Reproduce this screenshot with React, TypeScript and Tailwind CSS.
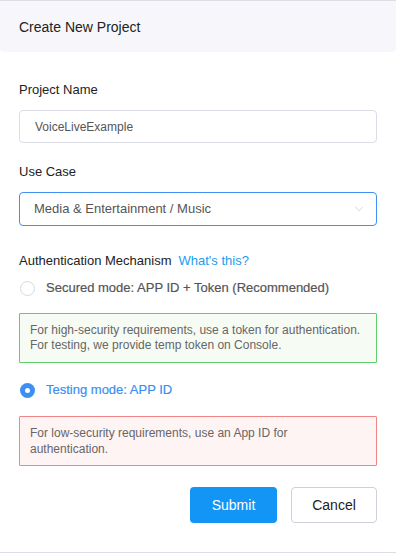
import { ChevronDown } from "lucide-react";

function Radio({ checked }: { checked?: boolean }) {
  if (checked) {
    return (
      <span className="flex h-[15px] w-[15px] shrink-0 items-center justify-center rounded-full bg-[#3d8ef5]">
        <span className="h-[5px] w-[5px] rounded-full bg-white" />
      </span>
    );
  }
  return <span className="h-[15px] w-[15px] shrink-0 rounded-full border border-[#d8d8e2] bg-white" />;
}

export default function App() {
  return (
    <div className="flex h-[553px] w-[396px] flex-col border-y border-[#dddde5] bg-white font-['Liberation_Sans',Arial,sans-serif] text-[#222]">
      <div className="flex h-[51px] shrink-0 items-center rounded-b-[4px] bg-[#f7f7fb] pl-[19px] pt-[2px] text-[14px]">
        Create New Project
      </div>

      <div className="flex flex-col px-[19px]">
        <label className="mt-[28px] text-[13px] leading-[20px]">Project Name</label>
        <div className="mt-[10px] flex h-[33px] items-center rounded-[4px] border border-[#dcdce6] px-[15px] text-[12px] text-[#555]">
          VoiceLiveExample
        </div>

        <label className="mt-[19px] text-[13px] leading-[20px]">Use Case</label>
        <div className="mt-[10px] flex h-[34px] items-center justify-between rounded-[4px] border border-[#3f8ff5] pl-[14px] pr-[10px] text-[13px] text-[#555]">
          <span>Media &amp; Entertainment / Music</span>
          <ChevronDown className="h-[14px] w-[14px] text-[#c4c4cc]" strokeWidth={1.2} />
        </div>

        <div className="mt-[25px] flex gap-[7px] text-[13px] leading-[20px]">
          <span>Authentication Mechanism</span>
          <span className="text-[#1d9bf0]">What's this?</span>
        </div>

        <div className="mt-[7px] flex items-center gap-[11px] pl-px text-[13px] font-medium leading-[20px] text-[#555] [-webkit-text-stroke:0.2px_#555]">
          <Radio />
          <span>Secured mode: APP ID + Token (Recommended)</span>
        </div>

        <div className="mt-[15px] flex h-[50px] flex-col justify-center rounded-[1px] border border-[#5fcf6d] bg-[#f6fbf4] px-[10px] text-[12px] leading-[15px] text-[#666]">
          <p>For high-security requirements, use a token for authentication.</p>
          <p>For testing, we provide temp token on Console.</p>
        </div>

        <div className="mt-[17px] flex items-center gap-[11px] pl-px text-[13px] font-medium leading-[20px] text-[#3a8ff2] [-webkit-text-stroke:0.2px_#3a8ff2]">
          <Radio checked />
          <span>Testing mode: APP ID</span>
        </div>

        <div className="mt-[16px] flex h-[50px] flex-col justify-center rounded-[1px] border border-[#f08585] bg-[#fff4f4] px-[10px] text-[12px] leading-[16px] text-[#666]">
          <p>For low-security requirements, use an App ID for</p>
          <p>authentication.</p>
        </div>

        <div className="mt-[21px] flex justify-end gap-[14px]">
          <button className="h-[36px] w-[87px] rounded-[4px] bg-[#1395f5] text-[14px] text-white">Submit</button>
          <button className="h-[36px] w-[86px] rounded-[4px] border border-[#cfcfdc] bg-white text-[14px] text-[#222]">
            Cancel
          </button>
        </div>
      </div>
    </div>
  );
}
